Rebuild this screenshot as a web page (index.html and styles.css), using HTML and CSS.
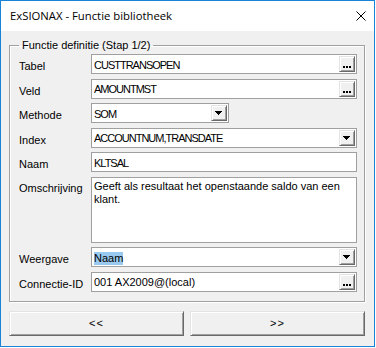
FILE: index.html
```html
<!DOCTYPE html>
<html lang="nl">
<head>
<meta charset="utf-8">
<title>ExSIONAX - Functie bibliotheek</title>
<link rel="stylesheet" href="styles.css">
</head>
<body>
<div class="window">
  <div class="titlebar">
    <span class="title">ExSIONAX - Functie bibliotheek</span>
    <svg class="close" width="10" height="10" viewBox="0 0 10 10"><path d="M0.5 0.5 L9.5 9.5 M9.5 0.5 L0.5 9.5" stroke="#000" stroke-width="1" fill="none"/></svg>
  </div>
  <div class="client">
    <fieldset class="group">
      <legend>Functie definitie (Stap 1/2)</legend>
      <div class="form">
        <span class="lbl">Tabel</span>
        <div class="field"><span class="value caps">CUSTTRANSOPEN</span><span class="btn"><svg width="14" height="14" viewBox="0 0 14 14"><path d="M3 9h2v2h-2z M6 9h2v2h-2z M9 9h2v2h-2z" fill="#000"/></svg></span></div>

        <span class="lbl">Veld</span>
        <div class="field"><span class="value caps">AMOUNTMST</span><span class="btn"><svg width="14" height="14" viewBox="0 0 14 14"><path d="M3 9h2v2h-2z M6 9h2v2h-2z M9 9h2v2h-2z" fill="#000"/></svg></span></div>

        <span class="lbl">Methode</span>
        <div class="field short"><span class="value caps">SOM</span><span class="btn"><svg width="14" height="14" viewBox="0 0 14 14"><path d="M3 5h7v1h-7z M4 6h5v1h-5z M5 7h3v1h-3z M6 8h1v1h-1z" fill="#000"/></svg></span></div>

        <span class="lbl">Index</span>
        <div class="field"><span class="value caps">ACCOUNTNUM,TRANSDATE</span><span class="btn"><svg width="14" height="14" viewBox="0 0 14 14"><path d="M3 5h7v1h-7z M4 6h5v1h-5z M5 7h3v1h-3z M6 8h1v1h-1z" fill="#000"/></svg></span></div>

        <span class="lbl">Naam</span>
        <div class="field"><span class="value caps">KLTSAL</span></div>

        <span class="lbl memo-lbl">Omschrijving</span>
        <div class="memo">Geeft als resultaat het openstaande saldo van een<br>klant.</div>

        <span class="lbl">Weergave</span>
        <div class="field"><span class="value"><span class="sel">Naam</span></span><span class="btn"><svg width="14" height="14" viewBox="0 0 14 14"><path d="M3 5h7v1h-7z M4 6h5v1h-5z M5 7h3v1h-3z M6 8h1v1h-1z" fill="#000"/></svg></span></div>

        <span class="lbl">Connectie-ID</span>
        <div class="field"><span class="value">001 AX2009@(local)</span><span class="btn"><svg width="14" height="14" viewBox="0 0 14 14"><path d="M3 9h2v2h-2z M6 9h2v2h-2z M9 9h2v2h-2z" fill="#000"/></svg></span></div>
      </div>
    </fieldset>
    <div class="nav">
      <button class="navbtn" type="button">&lt;&lt;</button>
      <button class="navbtn" type="button">&gt;&gt;</button>
    </div>
  </div>
</div>
</body>
</html>
```
FILE: styles.css
```css
html, body {
  margin: 0;
  background: #ffffff;
}
body {
  font-family: "Liberation Sans", Arial, sans-serif;
  font-size: 11px;
  line-height: 13px;
  color: #000;
}
.window {
  width: 375px;
  height: 347px;
  box-sizing: border-box;
  border: 1px solid #1883d7;
  background: #f0f0f0;
  display: flex;
  flex-direction: column;
}
.titlebar {
  height: 30px;
  flex: none;
  background: #fff;
  display: flex;
  align-items: center;
  justify-content: space-between;
  padding: 0 8px 0 9px;
}
.title {
  font-family: "Open Sans", "Liberation Sans", sans-serif;
  font-size: 11.3px;
  line-height: 16px;
  color: #000;
}
.close {
  display: block;
}
.client {
  flex: 1;
  padding: 8px 9px 0 8px;
}
.group {
  margin: 0;
  padding: 0 7px 9px 9px;
  border: 1px solid #a0a0a0;
  box-shadow: inset 1px 1px 0 #fff, 1px 1px 0 #fff;
  min-width: 0;
}
.group legend {
  margin: 0;
  padding: 0 3px;
  line-height: 13px;
}
.form {
  padding-top: 2px;
  display: grid;
  grid-template-columns: 72px 266px;
  grid-template-rows: 20px 20px 20px 20px 20px 66px 20px 20px;
  row-gap: 4.5px;
}
.lbl {
  align-self: start;
  padding-top: 6px;
  white-space: nowrap;
}
.memo-lbl {
  padding-top: 5px;
}
.field {
  height: 20px;
  box-sizing: border-box;
  border: 1px solid #a0a0a0;
  background: #fff;
  display: flex;
  align-items: center;
  padding: 1px 1px 1px 2px;
}
.field.short {
  width: 138px;
}
.value {
  flex: 1;
  min-width: 0;
  padding-top: 2px;
  line-height: 13px;
  white-space: nowrap;
  overflow: hidden;
}
.caps {
  letter-spacing: -1px;
}
.sel {
  background: #99c9ef;
  display: inline-block;
}
.btn {
  flex: none;
  width: 16px;
  height: 16px;
  box-sizing: border-box;
  background: #f0f0f0;
  border: 1px solid;
  border-color: #e3e3e3 #696969 #696969 #e3e3e3;
  box-shadow: inset 1px 1px 0 #fff, inset -1px -1px 0 #a0a0a0;
}
.btn svg {
  display: block;
}
.memo {
  height: 66px;
  box-sizing: border-box;
  border: 1px solid #a0a0a0;
  background: #fff;
  padding: 2px 2px;
  white-space: nowrap;
  overflow: hidden;
}
.nav {
  display: flex;
  gap: 6px;
  margin-top: 9px;
}
.navbtn {
  flex: 1;
  height: 25px;
  margin: 0;
  padding: 0;
  font: inherit;
  letter-spacing: 1px;
  color: #000;
  background: #f0f0f0;
  border: 1px solid;
  border-color: #e3e3e3 #696969 #696969 #e3e3e3;
  box-shadow: inset 1px 1px 0 #fff, inset -1px -1px 0 #a0a0a0;
  border-radius: 0;
}
```
